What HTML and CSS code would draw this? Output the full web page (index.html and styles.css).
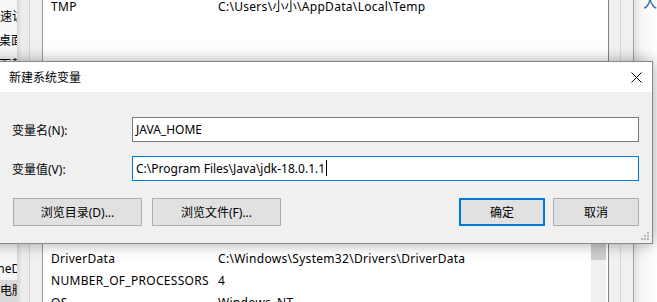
FILE: index.html
```html
<!DOCTYPE html>
<html lang="zh-CN">
<head>
    <meta charset="UTF-8">
    <title>新建系统变量</title>
    <link rel="stylesheet" href="styles.css">
</head>
<body>

<div class="desk">
    <div class="nav">
        <div class="nav-top">
            <div class="nav-item lvl0">快速访问</div>
            <div class="nav-item lvl1">桌面</div>
            <div class="nav-item lvl1">下载</div>
        </div>
        <div class="nav-bottom">
            <div class="nav-item lvl0">OneDrive</div>
            <div class="nav-item lvl0 selected">此电脑</div>
            <div class="nav-item lvl0">网络</div>
        </div>
    </div>
    <div class="frame frame-a"></div>
    <div class="frame frame-b"></div>

    <div class="list">
        <div class="upper">
            <div class="row"><span class="name">TMP</span><span class="value">C:\Users\小小\AppData\Local\Temp</span></div>
        </div>
        <div class="lower">
            <div class="rows">
                <div class="row"><span class="name">ComSpec</span><span class="value">C:\Windows\system32\cmd.exe</span></div>
                <div class="row"><span class="name">DriverData</span><span class="value">C:\Windows\System32\Drivers\DriverData</span></div>
                <div class="row"><span class="name">NUMBER_OF_PROCESSORS</span><span class="value">4</span></div>
                <div class="row"><span class="name">OS</span><span class="value">Windows_NT</span></div>
            </div>
            <div class="scroll"><div class="thumb"></div></div>
        </div>
    </div>

    <div class="frame frame-c"></div>
    <div class="frame frame-d"></div>
    <div class="outside"><span class="peek">大</span></div>
</div>

<div class="dialog">
    <div class="titlebar">
        <span class="title">新建系统变量</span>
        <svg class="close" width="11" height="11" viewBox="0 0 11 11">
            <path d="M0.5 0.5 L10.5 10.5 M10.5 0.5 L0.5 10.5" stroke="#000" stroke-width="1" fill="none"/>
        </svg>
    </div>
    <div class="body">
        <div class="fields">
            <label class="label">变量名(N):</label>
            <div class="input">JAVA_HOME</div>
            <label class="label">变量值(V):</label>
            <div class="input focused">C:\Program Files\Java\jdk-18.0.1.1<span class="caret"></span></div>
        </div>
        <div class="buttons">
            <div class="left-buttons">
                <button class="btn wide">浏览目录(D)...</button>
                <button class="btn wide">浏览文件(F)...</button>
            </div>
            <div class="right-buttons">
                <button class="btn default">确定</button>
                <button class="btn">取消</button>
            </div>
        </div>
        <svg class="grip" width="9" height="9" viewBox="0 0 9 9">
            <rect x="6" y="0" width="2" height="2" fill="#b8b8b8"/>
            <rect x="3" y="3" width="2" height="2" fill="#b8b8b8"/>
            <rect x="6" y="3" width="2" height="2" fill="#b8b8b8"/>
            <rect x="0" y="6" width="2" height="2" fill="#b8b8b8"/>
            <rect x="3" y="6" width="2" height="2" fill="#b8b8b8"/>
            <rect x="6" y="6" width="2" height="2" fill="#b8b8b8"/>
        </svg>
    </div>
</div>

</body>
</html>
```

FILE: styles.css
```css
body {
    margin: 0;
    width: 657px;
    height: 302px;
    overflow: hidden;
    position: relative;
    font-family: "Noto Sans", "Noto Sans CJK SC", sans-serif;
    font-size: 12px;
    color: #000;
    background-color: #fff;
}
.desk {
    display: flex;
    height: 302px;
}
.nav {
    width: 17px;
    background-color: #f7f7f7;
    display: flex;
    flex-direction: column;
    justify-content: space-between;
    overflow: hidden;
}
.nav-top {
    padding-top: 6px;
}
.nav-top .nav-item {
    height: 24px;
    line-height: 22px;
}
.nav-bottom {
    margin-bottom: -22px;
}
.nav-item {
    height: 22px;
    line-height: 22px;
    white-space: nowrap;
}
.nav-item.lvl0 {
    text-indent: -12px;
}
.nav-item.lvl1 {
    text-indent: -1px;
}
.nav-item.selected {
    background-color: #d9d9d9;
}
.frame {
    flex: none;
}
.frame-a {
    width: 12px;
    background: linear-gradient(to right, #d6d6d6, #ececec 40%, #ececec);
    border-right: 1px solid #d2d2d2;
}
.frame-b {
    width: 12px;
    background-color: #f0f0f0;
    border-right: 1px solid #9a9a9a;
}
.list {
    flex: none;
    width: 565px;
    display: flex;
    flex-direction: column;
    background-color: #fff;
    border-right: 1px solid #828282;
}
.upper {
    flex: 1;
    margin-top: -4px;
}
.lower {
    height: 76px;
    display: flex;
}
.rows {
    flex: 1;
}
.row {
    display: flex;
    height: 22px;
    line-height: 22px;
    padding-left: 8px;
    white-space: nowrap;
    letter-spacing: 0.3px;
}
.name {
    width: 167px;
    flex: none;
}
.scroll {
    width: 15px;
    margin-right: 2px;
    background-color: #f0f0f0;
}
.thumb {
    height: 34px;
    background-color: #cdcdcd;
}
.frame-c {
    width: 11px;
    background-color: #f0f0f0;
    border-right: 1px solid #d8d8d8;
}
.frame-d {
    width: 12px;
    background-color: #f0f0f0;
    border-right: 1px solid #a0a0a0;
}
.outside {
    flex: 1;
    background: linear-gradient(to right, #e2e2e2, #f6f6f6 8px, #fff);
    overflow: hidden;
    padding-left: 9px;
}
.peek {
    display: block;
    margin-top: -6px;
    line-height: 16px;
    color: #2d62a0;
    font-size: 14px;
}

/* dialog */
.dialog {
    position: absolute;
    left: -10px;
    top: 61px;
    width: 661px;
    border: 1px solid #888;
    box-shadow: 0 0 14px rgba(0, 0, 0, 0.35);
    background-color: #f0f0f0;
}
.titlebar {
    height: 30px;
    background-color: #fff;
    display: flex;
    align-items: center;
    justify-content: space-between;
    padding: 0 10px 0 18px;
}
.close {
    display: block;
}
.body {
    position: relative;
    height: 151px;
    padding: 25px 12px 0 21px;
    box-sizing: border-box;
}
.fields {
    display: grid;
    grid-template-columns: 120px 507px;
    row-gap: 14px;
    align-items: center;
}
.input {
    height: 25px;
    box-sizing: border-box;
    border: 1px solid #7a7a7a;
    background-color: #fff;
    line-height: 23px;
    padding-left: 3px;
    white-space: nowrap;
}
.input.focused {
    border-color: #0078d7;
}
.caret {
    display: inline-block;
    width: 1px;
    height: 16px;
    background-color: #000;
    vertical-align: -3px;
    margin-left: 1px;
}
.buttons {
    display: flex;
    justify-content: space-between;
    margin-top: 17px;
    padding: 0 1px;
}
.left-buttons {
    display: flex;
    gap: 10px;
}
.right-buttons {
    display: flex;
    gap: 8px;
}
.btn {
    height: 28px;
    width: 86px;
    font-family: inherit;
    font-size: 12px;
    color: #000;
    background-color: #e1e1e1;
    border: 1px solid #adadad;
    padding: 0;
    margin: 0;
}
.btn.wide {
    width: 129px;
}
.btn.default {
    border: 2px solid #0078d7;
}
.grip {
    position: absolute;
    right: 2px;
    bottom: 2px;
}
```
